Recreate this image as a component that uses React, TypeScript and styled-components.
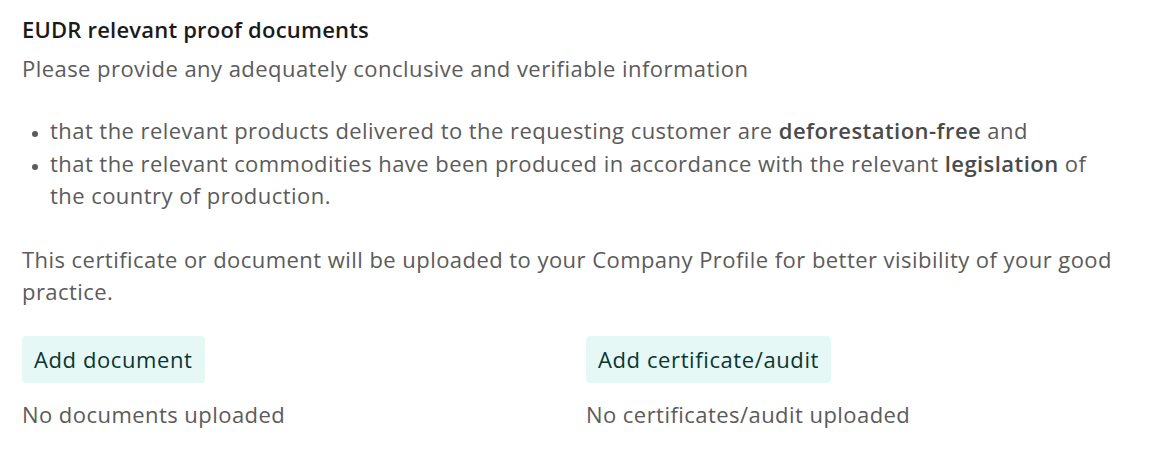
import React from "react";
import styled, { createGlobalStyle } from "styled-components";

const Global = createGlobalStyle`
  html, body { margin: 0; padding: 0; background: #ffffff; }
  body { font-family: "Open Sans", "Noto Sans", sans-serif; -webkit-font-smoothing: antialiased; }
`;

const Page = styled.div`
  padding: 13px 36px 0 22px;
  width: 1154px;
  box-sizing: border-box;
  font-size: 22px;
  line-height: 32.4px;
  letter-spacing: 0.45px;
  color: #5b5b5b;
`;

const Title = styled.h2`
  margin: 0;
  font-size: 22px;
  line-height: 32px;
  font-weight: 600;
  letter-spacing: 0.2px;
  color: #1a1a1a;
`;

const Para = styled.p<{ $top: number }>`
  margin: ${(p) => p.$top}px 0 0 0;
`;

const List = styled.ul`
  margin: 30px 0 0 0;
  padding-left: 28px;
  li::marker { font-size: 16px; }
`;

const Strong = styled.strong`
  font-weight: 600;
  color: #4a4a4a;
`;

const Columns = styled.div`
  display: grid;
  grid-template-columns: 1fr 1fr;
  column-gap: 32px;
  margin-top: 29px;
`;

const Column = styled.div`
  display: flex;
  flex-direction: column;
  align-items: flex-start;
`;

const AddButton = styled.button`
  font-family: inherit;
  font-size: 22px;
  line-height: 32px;
  letter-spacing: 0.6px;
  font-weight: 500;
  color: #0b3531;
  background: #e6f8f6;
  border: none;
  border-radius: 4px;
  padding: 7px 12px 8px;
  cursor: pointer;
`;

const Status = styled.div`
  margin-top: 15px;
  color: #5b5b5b;
`;

export default function App() {
  return (
    <>
      <Global />
      <Page>
        <Title>EUDR relevant proof documents</Title>
        <Para $top={7}>Please provide any adequately conclusive and verifiable information</Para>
        <List>
          <li>
            that the relevant products delivered to the requesting customer are <Strong>deforestation-free</Strong> and
          </li>
          <li>
            that the relevant commodities have been produced in accordance with the relevant <Strong>legislation</Strong> of the country of production.
          </li>
        </List>
        <Para $top={31}>
          This certificate or document will be uploaded to your Company Profile for better visibility of your good practice.
        </Para>
        <Columns>
          <Column>
            <AddButton>Add document</AddButton>
            <Status>No documents uploaded</Status>
          </Column>
          <Column>
            <AddButton>Add certificate/audit</AddButton>
            <Status>No certificates/audit uploaded</Status>
          </Column>
        </Columns>
      </Page>
    </>
  );
}
